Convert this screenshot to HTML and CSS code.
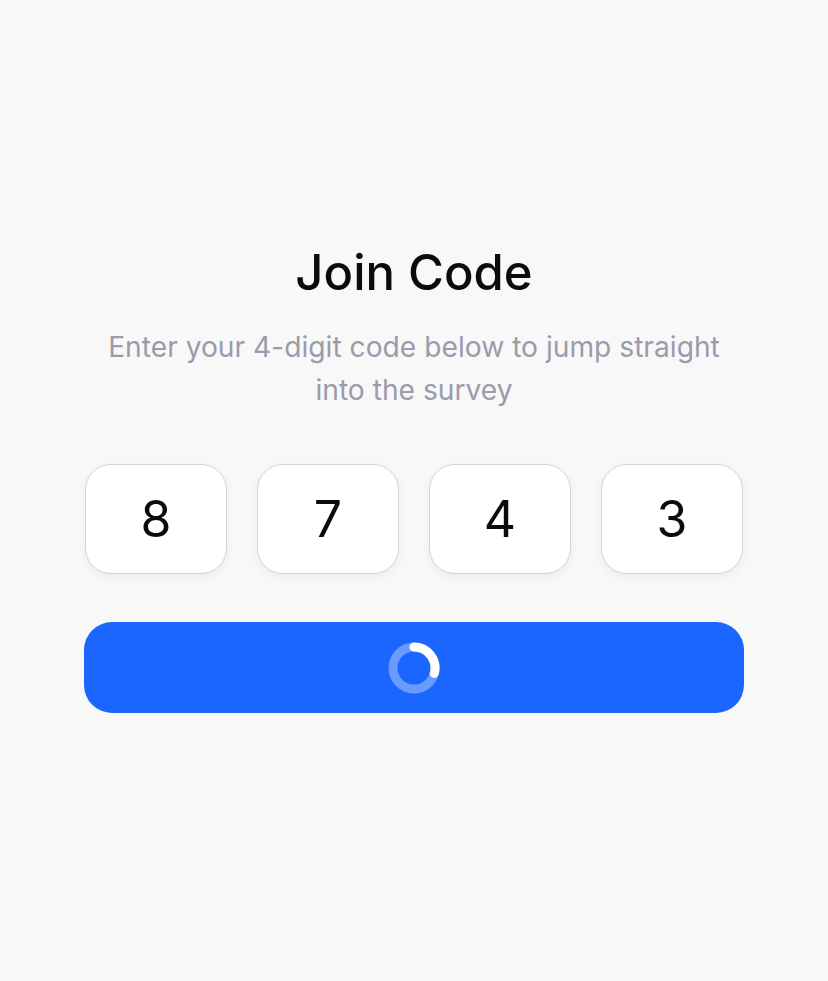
FILE: index.html
```html
<!DOCTYPE html>
<html lang="en">

<head>
    <meta charset="UTF-8">
    <title>Join Code</title>
    <link rel="stylesheet" href="styles.css">
</head>

<body>
    <main class="join">
        <h1 class="join-title">Join Code</h1>
        <p class="join-subtitle">Enter your 4-digit code below to jump straight into the survey</p>

        <!-- Casillas del código -->
        <div class="code-row">
            <div class="code-box">8</div>
            <div class="code-box">7</div>
            <div class="code-box">4</div>
            <div class="code-box">3</div>
        </div>

        <!-- Botón en estado de carga -->
        <button class="join-button" type="button" aria-label="Loading">
            <svg class="spinner" width="54" height="54" viewBox="0 0 54 54">
                <circle cx="27" cy="27" r="21" fill="none" stroke="rgba(255,255,255,0.35)" stroke-width="9"/>
                <path d="M27 6 A21 21 0 0 1 47.3 32.4" fill="none" stroke="#fff" stroke-width="9" stroke-linecap="round"/>
            </svg>
        </button>
    </main>
</body>

</html>
```

FILE: styles.css
```css
/* Estilos generales */
body {
    margin: 0;
    background: #f8f8f8;
    font-family: Inter, 'Noto Sans', sans-serif;
}

.join {
    width: 660px;
    margin: 0 auto;
    padding-top: 243px;
    display: flex;
    flex-direction: column;
    align-items: center;
}

.join-title {
    margin: 0;
    font-size: 49px;
    font-weight: 500;
    line-height: 60px;
    color: #0b0b0f;
}

.join-subtitle {
    margin: 23px 0 0;
    max-width: 640px;
    font-size: 28.2px;
    line-height: 43px;
    color: #9a9bab;
    text-align: center;
}

/* Fila de casillas */
.code-row {
    margin-top: 52px;
    display: flex;
    gap: 30px;
}

.code-box {
    width: 140px;
    height: 108px;
    background: #fff;
    border: 1px solid #d6d6d8;
    border-radius: 26px;
    box-shadow: 0 3px 8px rgba(0, 0, 0, 0.06);
    display: flex;
    align-items: center;
    justify-content: center;
    font-size: 50px;
    color: #0b0b0f;
}

/* Botón */
.join-button {
    margin-top: 48px;
    width: 660px;
    height: 91px;
    border: none;
    border-radius: 28px;
    background: #1a66ff;
    display: flex;
    align-items: center;
    justify-content: center;
    cursor: pointer;
}
```
